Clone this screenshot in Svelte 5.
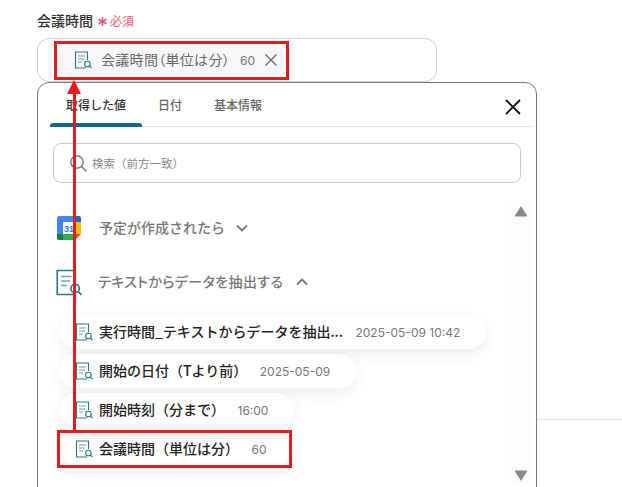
<script lang="ts">
	const chips = [
		{ name: '実行時間_テキストからデータを抽出...', value: '2025-05-09 10:42' },
		{ name: '開始の日付（Tより前）', value: '2025-05-09' },
		{ name: '開始時刻（分まで）', value: '16:00' },
		{ name: '会議時間（単位は分）', value: '60' }
	];
</script>

{#snippet docIcon(size)}
	<svg class="doc" width={size} height={size} viewBox="0 0 18 18" fill="none" stroke="#23788f" stroke-width="1.1">
		<path d="M13.5 9V1H1.5v16h10.5" />
		<path d="M4 5h7M4 8h6M4 11h4" stroke="#6f9fae" />
		<circle cx="13.4" cy="13" r="2.8" />
		<path d="M15.4 15l2.2 2.2" />
	</svg>
{/snippet}

<div class="page">
	<div class="label">
		<span class="title">会議時間</span>
		<span class="req">
			<svg width="9" height="9" viewBox="0 0 9 9" stroke="#f0566c" stroke-width="1.5">
				<path d="M4.5 0v9M0.6 2.25l7.8 4.5M8.4 2.25l-7.8 4.5" />
			</svg>
			必須
		</span>
	</div>

	<div class="field">
		<div class="chip">
			{@render docIcon(18)}
			<span class="chip-name">会議時間（単位は分）</span>
			<span class="chip-value">60</span>
			<svg width="14" height="14" viewBox="0 0 14 14" stroke="#666" stroke-width="1.3">
				<path d="M1.5 1.5l11 11M12.5 1.5l-11 11" />
			</svg>
		</div>
	</div>

	<div class="panel">
		<div class="tabs">
			<span class="tab active">取得した値</span>
			<span class="tab">日付</span>
			<span class="tab">基本情報</span>
			<svg class="close" width="16" height="16" viewBox="0 0 16 16" stroke="#111" stroke-width="1.8">
				<path d="M1 1l14 14M15 1L1 15" />
			</svg>
		</div>

		<div class="search">
			<svg width="19" height="19" viewBox="0 0 19 19" fill="none" stroke="#666" stroke-width="1.3">
				<circle cx="8" cy="8" r="6.2" />
				<path d="M12.5 12.5l5 5" />
			</svg>
			<span>検索（前方一致）</span>
		</div>

		<div class="body">
			<div class="list">
				<div class="group first">
					<svg class="gcal" width="24" height="24" viewBox="0 0 24 24">
						<path d="M2 0h16v6H6v12H0V2a2 2 0 0 1 2-2z" fill="#4285f4" />
						<path d="M18 0h4a2 2 0 0 1 2 2v4h-6z" fill="#1967d2" />
						<path d="M18 6h6v12h-6z" fill="#fbbc04" />
						<path d="M6 18h12v6H6z" fill="#34a853" />
						<path d="M0 18h6v6H2a2 2 0 0 1-2-2z" fill="#188038" />
						<path d="M18 18h6l-6 6z" fill="#ea4335" />
						<rect x="6" y="6" width="12" height="12" fill="#fff" />
						<text x="12" y="15.5" text-anchor="middle" class="cal-num">31</text>
					</svg>
					<span>予定が作成されたら</span>
					<svg class="chev" width="12" height="8" viewBox="0 0 12 8" fill="none" stroke="#777" stroke-width="1.8">
						<path d="M1 1.5l5 5 5-5" />
					</svg>
				</div>

				<div class="group second">
					{@render docIcon(27)}
					<span>テキストからデータを抽出する</span>
					<svg class="chev" width="12" height="8" viewBox="0 0 12 8" fill="none" stroke="#777" stroke-width="1.8">
						<path d="M1 6.5l5-5 5 5" />
					</svg>
				</div>

				<div class="items">
					{#each chips as c}
						<div class="item">
							{@render docIcon(18)}
							<span class="item-name">{c.name}</span>
							<span class="item-value">{c.value}</span>
						</div>
					{/each}
				</div>
			</div>

			<div class="scrollbar">
				<svg class="tri up" width="14" height="12" viewBox="0 0 14 12" fill="#888">
					<path d="M7 1L13 10.5a.6.6 0 0 1-.5 1h-11a.6.6 0 0 1-.5-1z" />
				</svg>
				<svg class="tri down" width="14" height="12" viewBox="0 0 14 12" fill="#888">
					<path d="M7 11L13 1.5a.6.6 0 0 0-.5-1h-11a.6.6 0 0 0-.5 1z" />
				</svg>
			</div>
		</div>
	</div>

	<div class="divider"></div>

	<div class="mark mark-top"></div>
	<div class="mark mark-bottom"></div>
	<div class="arrow-line"></div>
	<div class="arrow-head"></div>
</div>

<style>
	:global(body) {
		margin: 0;
		background: #fff;
	}

	.page {
		position: relative;
		width: 622px;
		height: 487px;
		overflow: hidden;
		box-sizing: border-box;
		padding: 10px 0 0 37px;
		font-family: "Noto Sans CJK JP", "Noto Sans", sans-serif;
		color: #333;
	}

	.label {
		display: flex;
		align-items: center;
		gap: 5px;
		height: 20px;
		margin-bottom: 8px;
	}

	.title {
		font-size: 14px;
		font-weight: 500;
		color: #333;
		margin-top: -1px;
	}

	.req {
		display: flex;
		align-items: center;
		gap: 3px;
		font-size: 12px;
		color: #f0566c;
	}

	.req svg {
		margin-top: 3px;
	}

	.field {
		box-sizing: border-box;
		width: 400px;
		height: 44px;
		border: 1px solid #ccd3dc;
		border-radius: 12px;
		padding: 5px 0 0 20px;
	}

	.chip {
		display: flex;
		align-items: center;
		box-sizing: border-box;
		width: 228px;
		height: 32px;
		border-radius: 16px;
		background: #f8f8f8;
		padding-left: 16px;
		color: #666;
	}

	.chip-name {
		font-size: 14px;
		letter-spacing: 0.3px;
		font-feature-settings: "palt";
		margin-left: 9px;
		margin-top: -2px;
		white-space: nowrap;
	}

	.chip-value {
		font-size: 12px;
		font-family: Inter, "Noto Sans", sans-serif;
		color: #777;
		margin: 0 9px 0 10px;
	}

	.panel {
		box-sizing: border-box;
		width: 500px;
		height: 420px;
		border: 1px solid #777;
		border-radius: 12px;
		background: #fff;
		padding: 0 3px 0 12px;
	}

	.tabs {
		position: relative;
		display: flex;
		align-items: center;
		gap: 32px;
		height: 43px;
		padding-left: 16px;
		border-bottom: 1px solid #e2e2e2;
	}

	.tab {
		font-size: 12px;
		font-weight: 500;
		color: #666;
		padding-bottom: 1px;
		white-space: nowrap;
	}

	.tab.active {
		color: #333;
	}

	.tab.active::after {
		content: "";
		position: absolute;
		left: 0;
		bottom: -1px;
		width: 92px;
		height: 4px;
		border-radius: 3px 3px 0 0;
		background: #0b6a85;
	}

	.close {
		position: absolute;
		left: 455px;
		top: 16px;
	}

	.search {
		display: flex;
		align-items: center;
		gap: 4px;
		box-sizing: border-box;
		width: 468px;
		height: 40px;
		margin: 16px 0 0 3px;
		padding-left: 15px;
		border: 1px solid #c8c8c8;
		border-radius: 8px;
		font-size: 11.5px;
		color: #8a8a8a;
	}

	.body {
		display: flex;
		margin-top: 16px;
		height: 285px;
	}

	.list {
		width: 460px;
	}

	.group {
		display: flex;
		align-items: center;
		font-size: 14px;
		font-weight: 500;
		color: #777;
	}

	.group span {
		padding-bottom: 2px;
	}

	.group.first {
		padding: 17px 0 0 7px;
		height: 24px;
	}

	.group.first span {
		margin-left: 18px;
	}

	.group.first .chev {
		margin-left: 11px;
	}

	.group.second {
		margin-top: 28px;
		padding-left: 5px;
		height: 28px;
	}

	.group.second span {
		margin-left: 16px;
		letter-spacing: 0.4px;
		font-feature-settings: "palt";
	}

	.chev {
		margin-left: 13px;
	}

	.gcal .cal-num {
		font-size: 9px;
		font-weight: 700;
		fill: #3b78e7;
		font-family: "Liberation Sans", sans-serif;
	}

	.items {
		display: flex;
		flex-direction: column;
		align-items: flex-start;
		gap: 5px;
		margin: 19px 0 0 10px;
	}

	.item {
		display: flex;
		align-items: center;
		box-sizing: border-box;
		height: 34px;
		padding: 0 26px 0 15px;
		border-radius: 17px;
		background: #fff;
		box-shadow: 0 5px 18px rgba(0, 0, 0, 0.08);
	}

	.item-name {
		font-size: 14px;
		font-weight: 500;
		color: #222;
		margin-left: 6px;
		padding-bottom: 2px;
		white-space: nowrap;
	}

	.item-value {
		font-size: 12px;
		font-family: Inter, "Noto Sans", sans-serif;
		color: #777;
		margin-left: 12.5px;
		white-space: nowrap;
	}

	.scrollbar {
		position: relative;
		width: 23px;
		background: #fcfcfc;
	}

	.tri {
		position: absolute;
		left: 4px;
	}

	.tri.up {
		top: 6px;
	}

	.tri.down {
		bottom: 2px;
	}

	.divider {
		position: absolute;
		left: 537px;
		right: 0;
		top: 419px;
		height: 1px;
		background: #e4e4e4;
	}

	.mark {
		position: absolute;
		box-sizing: border-box;
		border: 3px solid #e51c1c;
	}

	.mark-top {
		left: 54px;
		top: 41px;
		width: 235px;
		height: 39px;
	}

	.mark-bottom {
		left: 57px;
		top: 430px;
		width: 235px;
		height: 38px;
	}

	.arrow-line {
		position: absolute;
		left: 73px;
		top: 92px;
		width: 3px;
		height: 340px;
		background: #e51c1c;
	}

	.arrow-head {
		position: absolute;
		left: 67px;
		top: 80px;
		width: 0;
		height: 0;
		border-left: 7.5px solid transparent;
		border-right: 7.5px solid transparent;
		border-bottom: 14px solid #e51c1c;
	}
</style>
